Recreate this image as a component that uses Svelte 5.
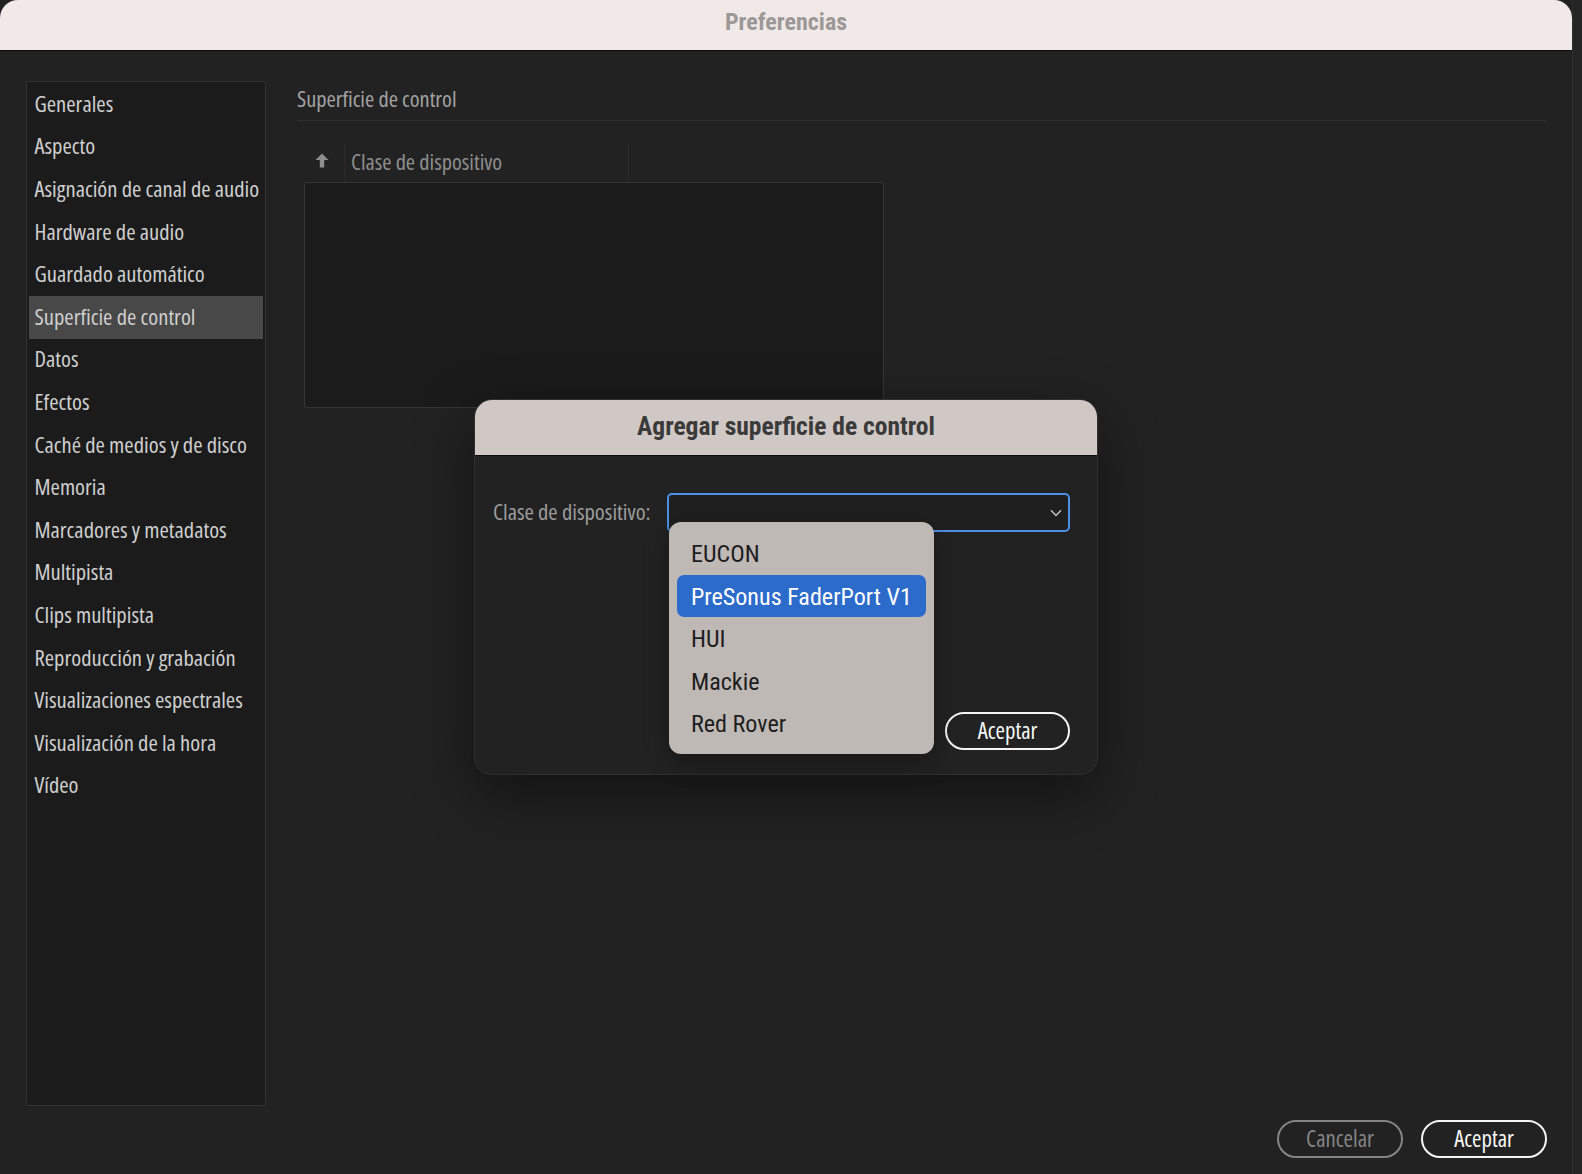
<script>
  const sections = [
    'Generales', 'Aspecto', 'Asignación de canal de audio', 'Hardware de audio',
    'Guardado automático', 'Superficie de control', 'Datos', 'Efectos',
    'Caché de medios y de disco', 'Memoria', 'Marcadores y metadatos', 'Multipista',
    'Clips multipista', 'Reproducción y grabación', 'Visualizaciones espectrales',
    'Visualización de la hora', 'Vídeo'
  ];
  const devices = ['EUCON', 'PreSonus FaderPort V1', 'HUI', 'Mackie', 'Red Rover'];
  let selected = $state('Superficie de control');
  let hovered = $state('PreSonus FaderPort V1');
</script>

<div class="window">
  <header class="titlebar">Preferencias</header>
  <div class="body">
    <nav class="sidebar">
      {#each sections as s}
        <button class="section" class:active={s === selected} onclick={() => (selected = s)}>{s}</button>
      {/each}
    </nav>
    <main class="content">
      <h2>Superficie de control</h2>
      <div class="table">
        <div class="thead">
          <div class="sort">
            <svg width="14" height="15" viewBox="0 0 14 15"><path d="M7 0.5 L13.5 7 H9.2 V14.5 H4.8 V7 H0.5 Z" fill="#8e8e8e"/></svg>
          </div>
          <div class="col">Clase de dispositivo</div>
        </div>
        <div class="tbody"></div>
      </div>
      <footer class="actions">
        <button class="pill muted">Cancelar</button>
        <button class="pill">Aceptar</button>
      </footer>
    </main>
  </div>

  <div class="dialog">
    <div class="dialog-title">Agregar superficie de control</div>
    <div class="dialog-body">
      <div class="field">
        <span class="field-label">Clase de dispositivo:</span>
        <div class="select">
          <svg width="12" height="8" viewBox="0 0 12 8"><path d="M1 1.2 L6 6.4 L11 1.2" fill="none" stroke="#c4c4c4" stroke-width="1.5"/></svg>
          <ul class="menu">
            {#each devices as d}
              <li class:hot={d === hovered} onmouseenter={() => (hovered = d)}>{d}</li>
            {/each}
          </ul>
        </div>
      </div>
      <div class="dialog-actions">
        <button class="pill small">Aceptar</button>
      </div>
    </div>
  </div>
</div>

<style>
  :global(body) {
    background: #252525;
    font-family: "Open Sans", "Liberation Sans", sans-serif;
    font-stretch: 75%;
  }

  .window {
    position: relative;
    width: 1573px;
    height: 1174px;
    display: flex;
    flex-direction: column;
    background: #222222;
    border-right: 1px solid #303030;
    box-sizing: border-box;
  }

  .titlebar {
    height: 51px;
    flex: none;
    box-sizing: border-box;
    border-radius: 18px 18px 0 0;
    border-bottom: 1px solid #0c0c0c;
    background: #f1e9e7;
    color: #9b9897;
    font: 700 24px/45px Roboto, sans-serif;
    font-stretch: 85%;
    text-align: center;
  }

  .body {
    flex: 1;
    display: grid;
    grid-template-columns: 266px 1fr;
    min-height: 0;
  }

  .sidebar {
    margin: 30px 0 68px 26px;
    padding: 1px 2px;
    box-sizing: border-box;
    display: flex;
    flex-direction: column;
    background: #1b1b1b;
    border: 1px solid #333333;
    border-radius: 3px;
  }

  .section {
    height: 42.6px;
    flex: none;
    padding: 0 0 2px 5.5px;
    border: none;
    background: none;
    color: #cfcfcf;
    font: inherit;
    font-size: 22.6px;
    text-align: left;
    white-space: nowrap;
  }

  .section.active {
    background: #484848;
  }

  .content {
    display: flex;
    flex-direction: column;
    padding: 30px 25px 16px 31px;
  }

  h2 {
    margin: 0;
    height: 39px;
    line-height: 35px;
    font-size: 22.4px;
    font-weight: 400;
    color: #a2a2a2;
    border-bottom: 1px solid #2e2e2e;
  }

  .table {
    margin: 23px 0 0 7px;
    width: 580px;
  }

  .thead {
    display: flex;
    height: 38px;
    color: #8e8e8e;
    font-size: 22.4px;
    line-height: 35px;
  }

  .sort {
    width: 41px;
    display: flex;
    padding: 9px 0 0 11px;
    box-sizing: border-box;
    border-right: 1px solid #2a2a2a;
  }

  .col {
    width: 277px;
    padding-left: 6px;
    border-right: 1px solid #2a2a2a;
  }

  .tbody {
    height: 226px;
    box-sizing: border-box;
    background: #1b1b1b;
    border: 1px solid #363636;
    border-radius: 2px;
  }

  .actions {
    margin-top: auto;
    display: flex;
    justify-content: flex-end;
    gap: 18px;
  }

  .pill {
    width: 126px;
    height: 38px;
    box-sizing: border-box;
    border: 2.5px solid #f4f4f4;
    border-radius: 19px;
    background: #222222;
    color: #f8f8f8;
    font: inherit;
    font-size: 22.8px;
    padding: 0 0 1px;
  }

  .pill.small {
    width: 125px;
  }

  .pill.muted {
    border-color: #858585;
    color: #858585;
  }

  .dialog {
    position: absolute;
    left: 474px;
    top: 399px;
    width: 624px;
    height: 376px;
    display: flex;
    flex-direction: column;
    box-sizing: border-box;
    border: 1px solid #303030;
    border-radius: 18px;
    background: #222222;
    box-shadow: 0 20px 60px rgba(0, 0, 0, 0.45);
  }

  .dialog-title {
    height: 56px;
    flex: none;
    box-sizing: border-box;
    border-radius: 17px 17px 0 0;
    border-bottom: 1px solid #0c0c0c;
    background: #d0c8c5;
    color: #3a3a3a;
    font: 700 25.5px/52px Roboto, sans-serif;
    font-stretch: 75%;
    text-align: center;
  }

  .dialog-body {
    flex: 1;
    display: flex;
    flex-direction: column;
    padding: 37px 27px 24px 18px;
  }

  .field {
    display: flex;
    align-items: center;
    gap: 17px;
  }

  .field-label {
    width: 157px;
    padding-bottom: 3px;
    font-size: 22.6px;
    color: #9c9c9c;
    white-space: nowrap;
  }

  .select {
    position: relative;
    flex: 1;
    height: 39px;
    box-sizing: border-box;
    display: flex;
    align-items: center;
    justify-content: flex-end;
    padding-right: 6px;
    border: 2px solid #4c8fe6;
    border-radius: 5px;
    background: #1f1f1f;
  }

  .menu {
    position: absolute;
    left: 0;
    top: 27px;
    width: 265px;
    height: 232px;
    margin: 0;
    padding: 10px 8px;
    box-sizing: border-box;
    list-style: none;
    border-radius: 12px;
    background: #bfb9b6;
    box-shadow: 0 8px 24px rgba(0, 0, 0, 0.35);
    color: #1d1d1d;
    font: 400 24.1px/42.6px Roboto, sans-serif;
    font-stretch: 75%;
  }

  .menu li {
    height: 42.6px;
    box-sizing: border-box;
    padding: 1px 0 0 14px;
    border-radius: 7px;
    white-space: nowrap;
  }

  .menu li.hot {
    background: #2d6bcb;
    color: #fff;
  }

  .dialog-actions {
    margin-top: auto;
    display: flex;
    justify-content: flex-end;
  }
</style>
